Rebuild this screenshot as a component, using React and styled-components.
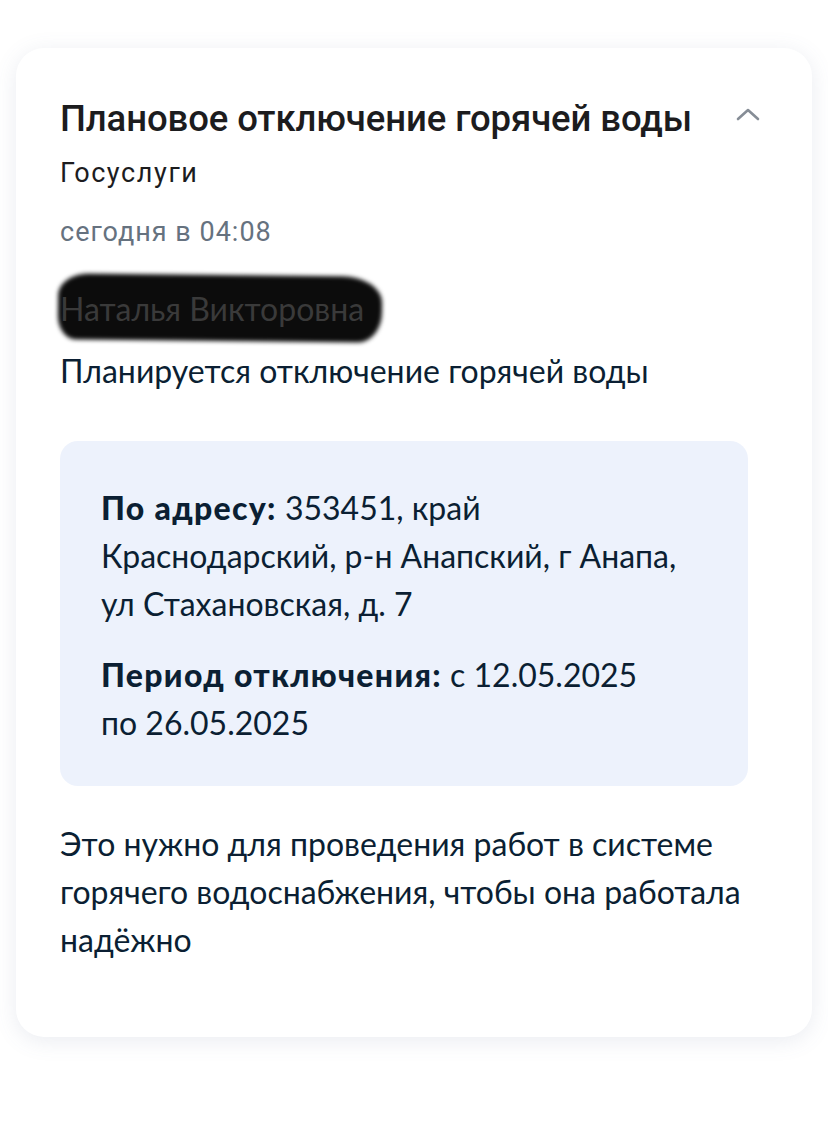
import React from "react";
import styled, { createGlobalStyle } from "styled-components";

const GlobalStyle = createGlobalStyle`
  html, body {
    margin: 0;
    padding: 0;
    background: #ffffff;
  }
  body {
    font-family: Lato, "Noto Sans", sans-serif;
    -webkit-font-smoothing: antialiased;
  }
`;

const Page = styled.div`
  width: 828px;
  min-height: 1145px;
  padding: 48px 16px 0 16px;
  box-sizing: border-box;
`;

const Card = styled.div`
  background: #ffffff;
  border-radius: 28px;
  box-shadow: 0 4px 22px rgba(90, 110, 150, 0.13);
  padding: 51px 64px 73px 44px;
`;

const Header = styled.div`
  display: flex;
  align-items: center;
  justify-content: space-between;
  margin-right: -12px;
`;

const Title = styled.h1`
  margin: 0;
  font-family: Roboto, "Noto Sans", sans-serif;
  font-weight: 500;
  font-size: 36.5px;
  line-height: 40px;
  color: #1c1c1e;
  letter-spacing: -0.1px;
  white-space: nowrap;
`;

const Chevron = styled.svg`
  width: 24px;
  height: 14px;
  margin-bottom: 10px;
`;

const Meta = styled.div`
  font-family: Roboto, "Noto Sans", sans-serif;
  font-size: 27px;
  line-height: 34px;
  color: ${(p) => (p.$muted ? "#66727f" : "#1c1c1e")};
  margin-top: ${(p) => p.$gap}px;
  letter-spacing: ${(p) => (p.$muted ? "1px" : "1.6px")};
`;

const Redacted = styled.div`
  position: relative;
  margin-top: 36px;
  display: inline-block;
  font-size: 32px;
  line-height: 48px;
  color: #3a3a3a;
`;

const Stroke = styled.span`
  position: absolute;
  left: -2px;
  right: -18px;
  top: -10px;
  bottom: -8px;
  background: #0c0c0c;
  border-radius: 30px 40px 24px 18px / 22px 26px 30px 24px;
  filter: blur(2px);
  transform: rotate(0.6deg);
  z-index: 0;
`;

const RedactedText = styled.span`
  position: relative;
  z-index: 1;
`;

const Text = styled.p`
  margin: ${(p) => p.$top || 0}px 0 0 0;
  font-size: 32px;
  line-height: 48px;
  color: #0b1f33;
`;

const InfoBox = styled.div`
  margin-top: 46px;
  background: #edf2fc;
  border-radius: 18px;
  padding: 43px 60px 39px 41px;
  display: flex;
  flex-direction: column;
  gap: 23px;
`;

const InfoLine = styled.p`
  margin: 0;
  font-size: 32px;
  line-height: 48px;
  color: #0b1f33;
`;

const Label = styled.b`
  font-weight: 900;
  letter-spacing: 1.3px;
`;

export default function App() {
  return (
    <>
      <GlobalStyle />
      <Page>
        <Card>
          <Header>
            <Title>Плановое отключение горячей воды</Title>
            <Chevron viewBox="0 0 24 14" fill="none">
              <path
                d="M2 12 L12 3 L22 12"
                stroke="#868d96"
                strokeWidth="2.6"
                strokeLinecap="round"
                strokeLinejoin="round"
              />
            </Chevron>
          </Header>
          <Meta $gap={17}>Госуслуги</Meta>
          <Meta $gap={25} $muted>
            сегодня в 04:08
          </Meta>
          <div>
            <Redacted>
              <Stroke />
              <RedactedText>Наталья Викторовна</RedactedText>
            </Redacted>
          </div>
          <Text $top={14}>Планируется отключение горячей воды</Text>
          <InfoBox>
            <InfoLine>
              <Label>По адресу:</Label> 353451, край Краснодарский, р-н Анапский, г Анапа,
              ул Стахановская, д. 7
            </InfoLine>
            <InfoLine>
              <Label>Период отключения:</Label> с 12.05.2025
              <br />
              по 26.05.2025
            </InfoLine>
          </InfoBox>
          <Text $top={34}>
            Это нужно для проведения работ в системе горячего водоснабжения,
            чтобы она работала надёжно
          </Text>
        </Card>
      </Page>
    </>
  );
}
